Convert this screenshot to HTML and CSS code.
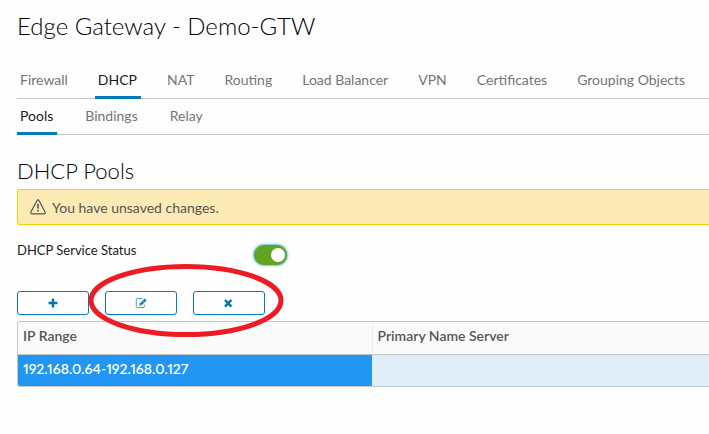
FILE: index.html
```html
<!DOCTYPE html>
<html lang="en">
<head>
<meta charset="utf-8">
<meta name="viewport" content="width=device-width, initial-scale=1">
<title>Edge Gateway - Demo-GTW</title>
<link rel="stylesheet" href="styles.css">
</head>
<body>
<main class="page">
  <h1 class="title">Edge Gateway - Demo-GTW</h1>
  <nav class="tabs tabs-main">
    <a class="tab" href="#">Firewall</a>
    <a class="tab active" href="#">DHCP</a>
    <a class="tab" href="#">NAT</a>
    <a class="tab" href="#">Routing</a>
    <a class="tab" href="#">Load Balancer</a>
    <a class="tab" href="#">VPN</a>
    <a class="tab" href="#">Certificates</a>
    <a class="tab" href="#">Grouping Objects</a>
  </nav>
  <nav class="tabs tabs-sub">
    <a class="tab active" href="#">Pools</a>
    <a class="tab" href="#">Bindings</a>
    <a class="tab" href="#">Relay</a>
  </nav>
  <h2 class="heading">DHCP Pools</h2>
  <div class="alert" role="status">
    <svg class="alert-icon" viewBox="0 0 16 16" aria-hidden="true">
      <path d="M7 1.6a1.1 1.1 0 0 1 2 0l6.2 11.6a1.1 1.1 0 0 1-1 1.6H1.8a1.1 1.1 0 0 1-1-1.6z" fill="none" stroke="currentColor" stroke-width="1.2"/>
      <path d="M8 5v4.5M8 10.8v1.8" fill="none" stroke="currentColor" stroke-width="1.6"/>
    </svg>
    <span>You have unsaved changes.</span>
  </div>
  <div class="status">
    <label class="status-label" for="service">DHCP Service Status</label>
    <input class="toggle" id="service" type="checkbox" role="switch" checked>
  </div>
  <div class="toolbar">
    <button class="btn" type="button" aria-label="Add">
      <svg class="icon" viewBox="0 0 12 12"><path d="M6 1.6v8.8M1.6 6h8.8" stroke="currentColor" stroke-width="2.4"/></svg>
    </button>
    <button class="btn" type="button" aria-label="Edit">
      <svg class="icon" viewBox="0 0 12 12">
        <path d="M7.5 1.5H2.3a1 1 0 0 0-1 1v7a1 1 0 0 0 1 1h6a1 1 0 0 0 1-1V7.5" fill="none" stroke="currentColor" stroke-width=".7"/>
        <path d="M4.4 8.6V6.7L9.6 1.5l1.9 1.9-5.2 5.2z" fill="currentColor"/>
        <path d="M5 6.9l1.1 1.1M6.3 6.2l3-3" stroke="#fff" stroke-width=".6"/>
      </svg>
    </button>
    <button class="btn" type="button" aria-label="Delete">
      <svg class="icon" viewBox="0 0 12 12"><path d="M2 3l6.4 6.6M8.4 3L2 9.6" stroke="currentColor" stroke-width="2.4"/></svg>
    </button>
    <svg class="marker" viewBox="0 0 196 75" aria-hidden="true"><ellipse cx="98" cy="37.5" rx="95" ry="34" fill="none" stroke="#ed1c24" stroke-width="5"/></svg>
  </div>
  <div class="grid">
    <table class="pools">
      <thead><tr><th class="col-range" scope="col">IP Range</th><th scope="col">Primary Name Server</th></tr></thead>
      <tbody><tr><td class="selected">192.168.0.64-192.168.0.127</td><td></td></tr></tbody>
    </table>
  </div>
</main>
</body>
</html>
```

FILE: styles.css
```css
* { box-sizing: border-box; }
body {
  margin: 0;
  background: #fefefe;
  color: #1a1a1a;
  font-family: Lato, "Open Sans", sans-serif;
  font-size: 14px;
}
.page { padding: 10px 0 24px 17px; }
.title, .heading { margin: 0; font-weight: 300; color: #000; }
.title { font-size: 24px; line-height: 32px; }
.tabs {
  display: flex;
  gap: 23px;
  height: 36px;
  border-bottom: 1px solid #c6c6c6;
  white-space: nowrap;
}
.tabs-main { margin-top: 21px; }
.tabs-sub { gap: 25px; }
.tab {
  height: 36px;
  padding: 0 4px 0 3px;
  border-bottom: 3px solid transparent;
  line-height: 34px;
  color: #757575;
  text-decoration: none;
}
.tab.active { border-color: #007cbb; color: #1a1a1a; }
.heading { margin-top: 20px; font-size: 22px; line-height: 32px; }
.alert {
  display: flex;
  align-items: center;
  gap: 6px;
  height: 36px;
  margin-top: 2px;
  padding-left: 12px;
  border: 1px solid #efd603;
  border-right: 0;
  border-radius: 3px 0 0 3px;
  background: #fceab4;
  color: #565656;
}
.alert-icon { width: 16px; height: 16px; }
.status { display: flex; align-items: flex-start; margin-top: 16px; }
.status-label { width: 237px; font-size: 13px; line-height: 18px; color: #1a1a1a; }
.toggle {
  appearance: none;
  display: flex;
  justify-content: flex-end;
  width: 33px;
  height: 20px;
  margin: 4px 0 0;
  padding: 3px 2px;
  border-radius: 10px;
  background: #60a420;
  box-shadow: 0 0 2px 1px #6bc1e3;
}
.toggle::before {
  content: "";
  width: 14px;
  height: 14px;
  border-radius: 50%;
  background: #fff;
}
.toolbar { position: relative; display: flex; gap: 16px; margin-top: 26px; }
.btn {
  display: flex;
  align-items: center;
  justify-content: center;
  width: 72px;
  height: 24px;
  padding: 0;
  border: 1px solid #007cbb;
  border-radius: 3px;
  background: transparent;
  color: #0072ad;
}
.icon { width: 12px; height: 12px; }
.marker {
  position: absolute;
  top: -28px;
  left: 71px;
  width: 196px;
  height: 75px;
  pointer-events: none;
}
.grid {
  margin-top: 6px;
  border: 1px solid #c6c6c6;
  border-right: 0;
  border-radius: 3px 0 0 3px;
  overflow: hidden;
}
.pools { width: 100%; border-collapse: collapse; table-layout: fixed; }
.pools th, .pools td { height: 32px; padding: 0 5px 4px; text-align: left; }
.pools th {
  border-bottom: 1px solid #c6c6c6;
  background: #fafafa;
  color: #565656;
  font-weight: 600;
}
.pools th + th { border-left: 1px solid #eee; }
.pools td { background: #e1edf6; }
.pools .col-range { width: 354px; }
.pools .selected {
  background: #2196f3;
  color: #fff;
  font-weight: 600;
  font-variant-numeric: proportional-nums;
}
```
